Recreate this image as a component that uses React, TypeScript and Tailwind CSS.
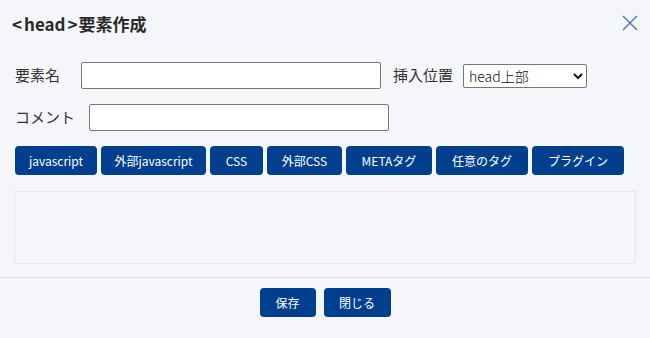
import React from "react";

const tags = [
  { label: "javascript", w: "w-[82px]" },
  { label: "外部javascript", w: "w-[105px]" },
  { label: "CSS", w: "w-[53px]" },
  { label: "外部CSS", w: "w-[75px]" },
  { label: "METAタグ", w: "w-[86px]" },
  { label: "任意のタグ", w: "w-[92px]" },
  { label: "プラグイン", w: "w-[92px]" },
];

const font = { fontFamily: '"Noto Sans CJK JP", "Noto Sans", sans-serif' };

export default function App() {
  return (
    <div className="w-[650px] h-[338px] bg-[#f5f6fa] text-[#333] flex flex-col" style={font}>
      <div className="h-[46px] flex items-center justify-between pl-[12px] pr-[12px] shrink-0">
        <h1 className="text-[17px] font-bold text-[#2a2a2a] leading-none flex items-center">
          <span className="mr-[2px]">&lt;</span>head<span className="ml-[2px] mr-[1px]">&gt;</span>要素作成
        </h1>
        <button className="w-[16px] h-[16px] text-[#3b6fc1]">
          <svg viewBox="0 0 16 16" width="16" height="16" fill="none" stroke="currentColor" strokeWidth="1.3">
            <path d="M1 1L15 15M15 1L1 15" />
          </svg>
        </button>
      </div>

      <div className="px-[15px] flex flex-col">
        <div className="mt-[16px] h-[27px] flex items-center">
          <span className="text-[15px] w-[66px]">要素名</span>
          <input className="w-[300px] h-[27px] bg-white border border-[#767676] rounded-[2px]" />
          <span className="text-[15px] ml-[12px]">挿入位置</span>
          <select className="ml-[10px] w-[124px] h-[24px] bg-white border border-[#767676] rounded-[2px] text-[14px] font-light pl-[1px] text-[#111]">
            <option>head上部</option>
          </select>
        </div>
        <div className="mt-[15px] h-[27px] flex items-center">
          <span className="text-[15px] w-[74px]">コメント</span>
          <input className="w-[300px] h-[27px] bg-white border border-[#767676] rounded-[2px]" />
        </div>
        <div className="mt-[15px] flex gap-[4px]">
          {tags.map((t) => (
            <button
              key={t.label}
              className={`${t.w} h-[29px] bg-[#003f8e] text-white text-[12px] rounded-[4px] leading-none`}
            >
              {t.label}
            </button>
          ))}
        </div>
      </div>

      <div className="mx-[14px] mt-[16px] h-[73px] border border-[#e6e8ec]" />

      <div className="mt-[13px] border-t border-[#dde2ea] flex justify-center gap-[8px] pt-[10px]">
        <button className="w-[56px] h-[29px] bg-[#003f8e] text-white text-[12px] rounded-[4px]">保存</button>
        <button className="w-[67px] h-[29px] bg-[#003f8e] text-white text-[12px] rounded-[4px]">閉じる</button>
      </div>
    </div>
  );
}
